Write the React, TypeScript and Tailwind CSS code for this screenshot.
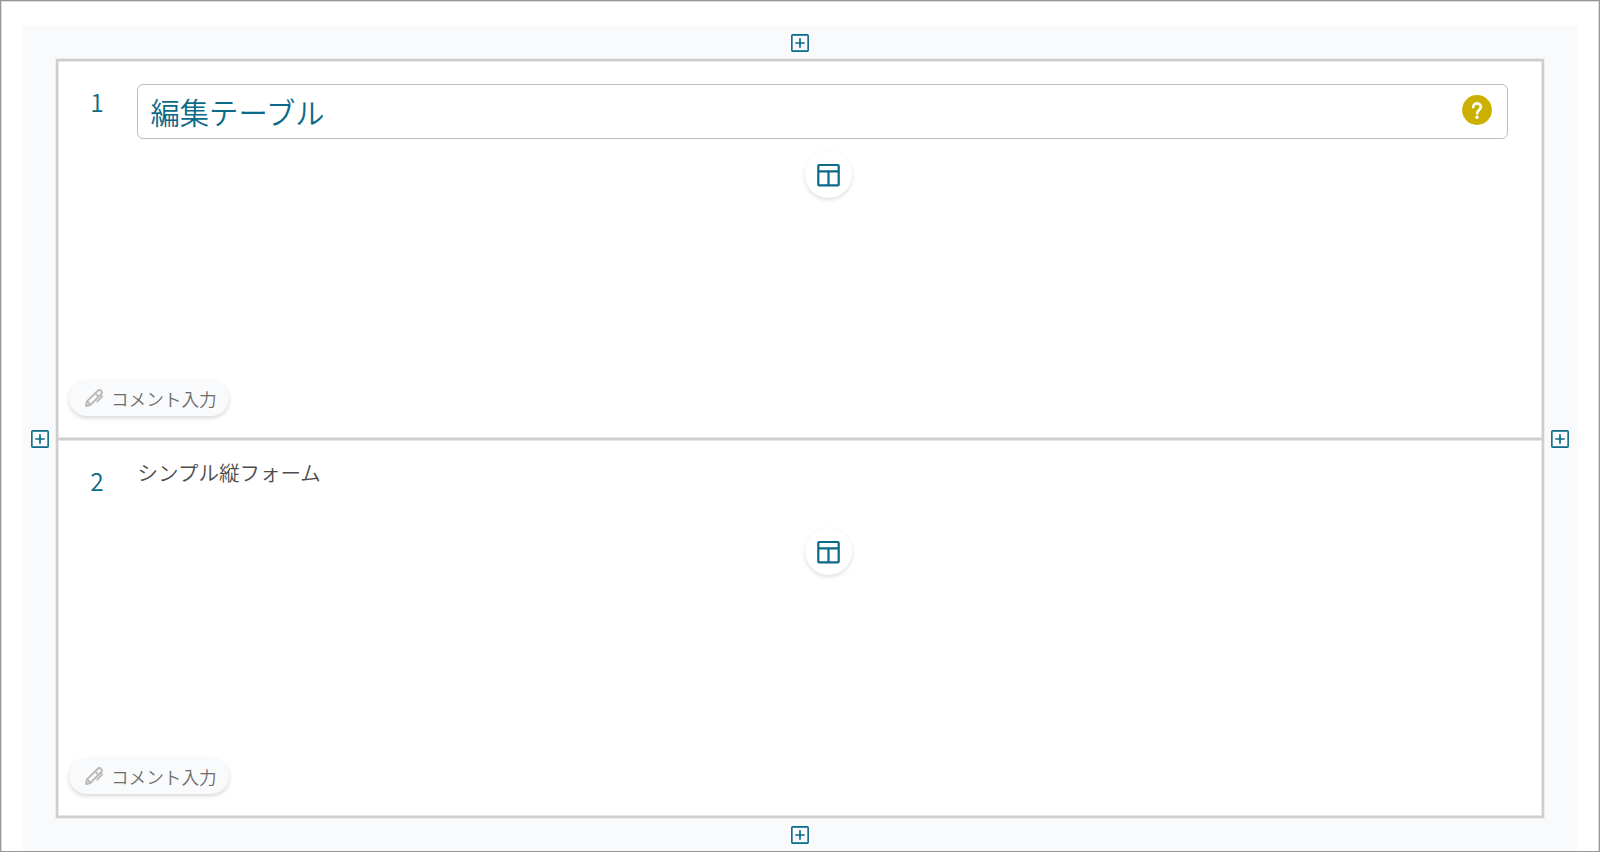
import { clsx } from 'clsx'

interface CellProps {
  no: number
  className?: string
  children: React.ReactNode
}

function PlusButton({ className }: { className?: string }) {
  return (
    <button type="button" aria-label="追加" className={clsx('block size-[18px] shrink-0', className)}>
      <svg viewBox="0 0 18 18" className="size-full" fill="none" stroke="#0b6a88">
        <rect x="0.85" y="0.85" width="16.3" height="16.3" rx="0.8" strokeWidth="1.6" />
        <path d="M4.3 9h9.4M9 4.3v9.4" strokeWidth="1.7" />
      </svg>
    </button>
  )
}

function TableButton() {
  return (
    <button
      type="button"
      aria-label="テーブル"
      className="flex size-[47px] items-center justify-center rounded-full bg-white shadow-[0_2px_4px_rgba(0,0,0,0.13)]"
    >
      <svg viewBox="0 0 24 24" className="size-6" fill="none" stroke="#0b6a88" strokeWidth="2.2">
        <rect x="2.3" y="2" width="20.4" height="20.4" rx="1" />
        <path d="M2.3 8.3h20.4M12.5 8.3v14" />
      </svg>
    </button>
  )
}

function HelpIcon() {
  return (
    <svg viewBox="0 0 30 30" className="-mt-[4px] size-[30px]">
      <circle cx="15" cy="15" r="14.9" fill="#cbb000" />
      <path
        d="M11.1 12.1a3.9 3.7 0 0 1 7.8 0.1c0 2.6-3.8 3-3.8 6.2"
        fill="none"
        stroke="#fff"
        strokeWidth="2.7"
        strokeLinecap="round"
      />
      <circle cx="15" cy="22.2" r="1.7" fill="#fff" />
    </svg>
  )
}

function CommentButton() {
  return (
    <button
      type="button"
      className="flex h-[36px] w-[160px] items-center rounded-full bg-[#f9fafc] pl-[16px] text-[17.6px] font-[350] text-[#6c6c6c] shadow-[0_2px_4px_rgba(0,0,0,0.16)]"
    >
      <svg
        viewBox="0 0 18 18"
        className="size-[18px] shrink-0"
        fill="none"
        stroke="#b9b9b9"
        strokeWidth="1.9"
        strokeLinejoin="round"
        strokeLinecap="round"
      >
        <path d="M1 17l.9-4.6L12.8 1.8a2.3 2.3 0 0 1 3.3 3.3L5.4 16 1 17z" />
        <path d="M2.4 12.6l2.9 2.9M11.3 5.5l1.3 1.3M16 5.8l.9 1.9-4.7 4.9" />
      </svg>
      <span className="ml-[8.5px] pt-px leading-none">コメント入力</span>
    </button>
  )
}

function Cell({ no, className, children }: CellProps) {
  return (
    <section className={clsx('flex flex-col', className)}>
      <div className="flex flex-1">
        <div className="w-[78px] shrink-0 pt-[29px] text-center text-[24.5px] leading-6 font-[350] text-[#0b6a88]">
          {no}
        </div>
        <div className="ml-px flex flex-1 flex-col pr-[34px]">{children}</div>
      </div>
      <div className="pb-[22px] pl-[10.5px]">
        <CommentButton />
      </div>
    </section>
  )
}

export default function App() {
  return (
    <div className="h-[852px] w-[1600px] border border-[#979797] bg-white font-['Noto_Sans_CJK_JP',sans-serif]">
      <div className="h-full border border-b-0 border-[#dcdcdc] px-[21px] pt-[23px]">
        <div className="flex h-full flex-col items-center bg-[#f9fafc] pt-[9px]">
          <PlusButton />
          <div className="mt-[7px] flex w-full items-center pl-[8px]">
            <PlusButton className="mt-px" />
            <div className="ml-[7px] h-[759px] w-[1488px] shrink-0 border-2 border-[#cecece] bg-white shadow-[inset_0_0_0_1px_#e6e6e6,0_0_0_1px_#eceeef]">
              <Cell no={1} className="h-[379px] border-b-2 border-[#cecece] shadow-[inset_0_-1px_0_#e6e6e6]">
                <div className="mt-[23px] flex h-[55px] items-center justify-between rounded-[6px] border border-[#bebebe] pr-[15px] pl-[12.5px]">
                  <h1 className="pt-px text-[29.3px] leading-none font-[350] text-[#0b6a88]">編集テーブル</h1>
                  <HelpIcon />
                </div>
                <div className="mt-[12px] ml-[667.5px]">
                  <TableButton />
                </div>
              </Cell>
              <Cell no={2} className="h-[376px] shadow-[inset_0_1px_0_#e6e6e6]">
                <h2 className="mt-[21px] pl-[0.5px] text-[20.5px] leading-[22px] font-[350] text-[#4c4c4c]">
                  シンプル縦フォーム
                </h2>
                <div className="mt-[45px] ml-[667.5px]">
                  <TableButton />
                </div>
              </Cell>
            </div>
            <PlusButton className="mt-px ml-[7px]" />
          </div>
          <PlusButton className="mt-[8px]" />
        </div>
      </div>
    </div>
  )
}
